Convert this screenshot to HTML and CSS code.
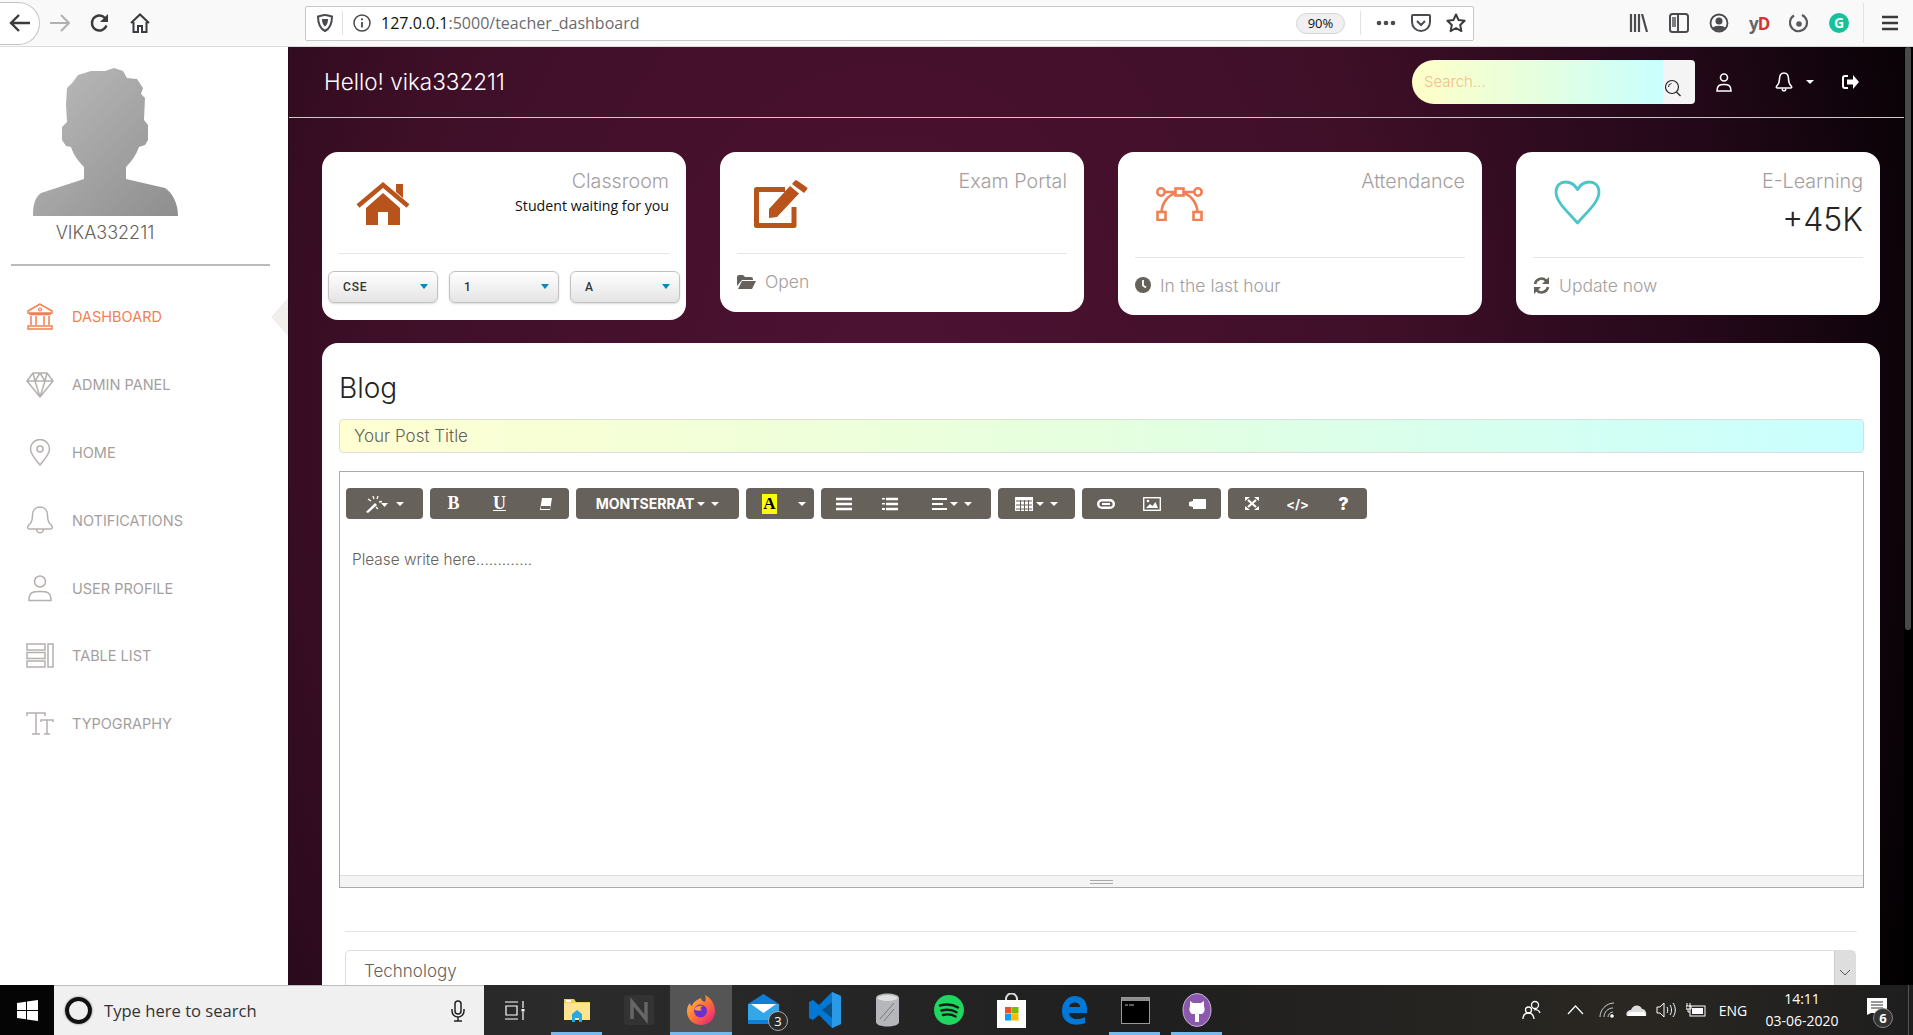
FILE: index.html
```html
<!DOCTYPE html>
<html lang="en">
<head>
    <meta charset="UTF-8">
    <meta name="viewport" content="width=device-width, initial-scale=1.0">
    <title>Teacher Dashboard</title>
    <link rel="stylesheet" href="styles.css">
</head>
<body>
<div class="browser">
    <div class="back-btn">
        <svg width="22" height="20" viewBox="0 0 22 20"><path d="M10 2 2 10l8 8M2 10h19" fill="none" stroke="#3b3b3d" stroke-width="2.4"/></svg>
    </div>
    <div class="nav-btn nav-forward">
        <svg width="20" height="18" viewBox="0 0 20 18"><path d="M11 1l8 8-8 8M19 9H0" fill="none" stroke="#b1b1b3" stroke-width="2"/></svg>
    </div>
    <div class="nav-btn">
        <svg width="20" height="20" viewBox="0 0 20 20"><path d="M16.5 12.5A7.5 7.5 0 1 1 15 5l1.500 1.500" fill="none" stroke="#3b3b3d" stroke-width="2.400"/><path d="M18 1v8h-8z" fill="#3b3b3d"/></svg>
    </div>
    <div class="nav-btn">
        <svg width="20" height="20" viewBox="0 0 20 20"><path d="M1 10l9-8.500L19 10M3.500 9v10h4.500v-6h4v6h4.500V9" fill="none" stroke="#3b3b3d" stroke-width="2"/></svg>
    </div>
    <div class="urlbar">
        <svg class="url-shield" width="16" height="18" viewBox="0 0 16 18"><path d="M1 2.500C5 1.500 6 1 8 1s3 .5 7 1.500C15 10 13 14.500 8 17 3 14.500 1 10 1 2.500z" fill="none" stroke="#4a4a4f" stroke-width="2"/><path d="M5 5h6c0 3.500-1 6-3 7.500C6 11 5 8.500 5 5z" fill="#4a4a4f"/></svg>
        <span class="url-sep"></span>
        <svg class="url-info" width="18" height="18" viewBox="0 0 18 18"><circle cx="9" cy="9" r="8" fill="none" stroke="#4a4a4f" stroke-width="1.500"/><path d="M9 8v5.500" stroke="#4a4a4f" stroke-width="1.800"/><circle cx="9" cy="5.300" r="1.100" fill="#4a4a4f"/></svg>
        <span class="url-text"><b>127.0.0.1</b>:5000/teacher_dashboard</span>
        <span class="zoom-pill">90%</span>
        <span class="url-sep sep-right"></span>
        <svg class="url-dots" width="20" height="6" viewBox="0 0 20 6"><circle cx="3" cy="3" r="2.300"/><circle cx="10" cy="3" r="2.300"/><circle cx="17" cy="3" r="2.300"/></svg>
        <svg class="url-pocket" width="20" height="18" viewBox="0 0 20 18"><path d="M2 1h16a1 1 0 0 1 1 1v6c0 5-4 9-9 9s-9-4-9-9V2a1 1 0 0 1 1-1z" fill="none" stroke="#4a4a4f" stroke-width="2"/><path d="M6 7l4 4 4-4" fill="none" stroke="#4a4a4f" stroke-width="2"/></svg>
        <svg class="url-star" width="20" height="20" viewBox="0 0 20 20"><path d="M10 1.500l2.600 5.600 6 .7-4.400 4.200 1.200 6.100L10 15l-5.400 3.100 1.200-6.100L1.400 7.800l6-.7z" fill="none" stroke="#3b3b3d" stroke-width="2" stroke-linejoin="round"/></svg>
    </div>
    <div class="browser-tools">
        <svg width="20" height="18" viewBox="0 0 20 18"><path d="M2 0v18M6 0v18M10 0v18M13 0l5 18" fill="none" stroke="#4a4a4f" stroke-width="2.200"/></svg>
        <svg width="20" height="20" viewBox="0 0 20 20"><rect x="1" y="1" width="18" height="18" rx="2.500" fill="none" stroke="#4a4a4f" stroke-width="2"/><path d="M9 1v18" stroke="#4a4a4f" stroke-width="2"/><path d="M3 4h4v10H3z" fill="#4a4a4f" opacity=".7"/></svg>
        <svg width="20" height="20" viewBox="0 0 20 20"><circle cx="10" cy="10" r="8.500" fill="none" stroke="#4a4a4f" stroke-width="1.800"/><circle cx="10" cy="8" r="3.500" fill="#4a4a4f"/><path d="M3.500 15c2-3 11-3 13 0-3 3.500-10 3.500-13 0z" fill="#4a4a4f"/></svg>
        <span class="yd">y<em>D</em></span>
        <svg width="20" height="20" viewBox="0 0 20 20"><path d="M13 2a8.500 8.500 0 1 1-8 .5" fill="none" stroke="#5a5a5f" stroke-width="2.200"/><circle cx="10" cy="11" r="2.800" fill="#5a5a5f"/></svg>
        <span class="grammarly">G</span>
        <span class="tools-sep"></span>
        <svg class="hamburger" width="16" height="16" viewBox="0 0 16 16"><path d="M0 2h16M0 8h16M0 14h16" stroke="#3b3b3d" stroke-width="2.400"/></svg>
    </div>
</div>

<div class="app">
    <aside class="sidebar">
        <svg class="avatar" width="145" height="148" viewBox="0 0 145 148">
            <defs><linearGradient id="avatarFill" x1="0" y1="0" x2="1" y2="1"><stop offset="0" stop-color="#bcbcbc"/><stop offset="1" stop-color="#8e8e8f"/></linearGradient></defs>
            <path fill="url(#avatarFill)" d="M81 0 72 3 58 3 45 7 40 14 34 20 33 36 34 54 29 59V72L33 78 38 79C41 88 46 94 51 99V111L8 125C3 129 0 134 0 148H145C145 136 140 125 132 120L93 111V99C99 93 103 87 106 79L112 77 115 72V57L111 52 112 30 108 26 110 20 104 11 94 10 90 3Z"/>
        </svg>
        <div class="user-name">VIKA332211</div>
        <div class="side-rule"></div>
        <nav class="side-nav">
            <a class="nav-item active">
                <svg width="28" height="27" viewBox="0 0 28 27"><path d="M14 1 2 8v2h24V8zM4 10v1.500h20V10M5 13v9M10 13v9M18 13v9M23 13v9M2 23h24v3H2z" fill="none" stroke="currentColor" stroke-width="1.500"/><circle cx="14" cy="6.500" r="1.500" fill="none" stroke="currentColor" stroke-width="1.200"/></svg>
                <span>DASHBOARD</span>
            </a>
            <a class="nav-item">
                <svg width="28" height="26" viewBox="0 0 28 26"><path d="M7 1h14l6 8-13 16L1 9zM1 9h26M9 9l5 16 5-16M7 1l2 8 5-8 5 8 2-8" fill="none" stroke="currentColor" stroke-width="1.500" stroke-linejoin="round"/></svg>
                <span>ADMIN PANEL</span>
            </a>
            <a class="nav-item">
                <svg width="28" height="27" viewBox="0 0 28 27"><path d="M14 26C9 20 4.500 15 4.500 10a9.500 9.500 0 0 1 19 0c0 5-4.500 10-9.500 16z" fill="none" stroke="currentColor" stroke-width="1.500"/><circle cx="14" cy="10" r="3" fill="none" stroke="currentColor" stroke-width="1.500"/></svg>
                <span>HOME</span>
            </a>
            <a class="nav-item">
                <svg width="28" height="28" viewBox="0 0 28 28"><path d="M14 1c-5 0-7.500 4-7.500 8.500 0 6-2 8-4.500 10.500-1 1.500 0 3 2 3h20c2 0 3-1.500 2-3-2.500-2.500-4.500-4.500-4.500-10.500C21.500 5 19 1 14 1zM10.500 23c.5 5 6.500 5 7 0" fill="none" stroke="currentColor" stroke-width="1.500"/></svg>
                <span>NOTIFICATIONS</span>
            </a>
            <a class="nav-item">
                <svg width="28" height="27" viewBox="0 0 28 27"><circle cx="14" cy="6.500" r="5.500" fill="none" stroke="currentColor" stroke-width="1.500"/><path d="M3 25c0-8 4-8.500 11-8.500S25 17 25 25.500H3z" fill="none" stroke="currentColor" stroke-width="1.500"/></svg>
                <span>USER PROFILE</span>
            </a>
            <a class="nav-item">
                <svg width="28" height="25" viewBox="0 0 28 25"><path d="M1 1h18v6H1zM1 9.500h18v6H1zM1 18h18v6H1zM22 1h5v23h-5z" fill="none" stroke="currentColor" stroke-width="1.500"/></svg>
                <span>TABLE LIST</span>
            </a>
            <a class="nav-item">
                <svg width="28" height="23" viewBox="0 0 28 23"><path d="M1 4V1h18v3M10 1v21M6 22h8M15 10V8h12v2M21 8v14M18 22h6" fill="none" stroke="currentColor" stroke-width="1.500"/></svg>
                <span>TYPOGRAPHY</span>
            </a>
        </nav>
        <span class="nav-arrow"></span>
    </aside>

    <main class="main">
        <div class="main-inner">
            <header class="topbar">
                <div class="hello">Hello! vika332211</div>
                <div class="search">
                    <span class="search-field">Search...</span>
                    <span class="search-btn">
                        <svg width="18" height="18" viewBox="0 0 18 18"><circle cx="8" cy="8" r="6.500" fill="none" stroke="#222" stroke-width="1.200"/><path d="M12.500 13l4 4" stroke="#222" stroke-width="1.200"/><path d="M4.500 8a3.500 3.500 0 0 1 3-3.500" stroke="#222" fill="none"/></svg>
                    </span>
                </div>
                <svg class="top-user" width="16" height="19" viewBox="0 0 16 19"><circle cx="8" cy="4.500" r="3.500" fill="none" stroke="#fff" stroke-width="1.600"/><path d="M1 18c0-5.500 2.500-6.500 7-6.500s7 1 7 6.500z" fill="none" stroke="#fff" stroke-width="1.600"/></svg>
                <svg class="top-bell" width="18" height="20" viewBox="0 0 18 20"><path d="M9 1C5.500 1 4.500 4 4.500 7c0 4-1 5.500-3 7.500C1 15.500 1.500 16 2.500 16h13c1 0 1.500-.5 1-1.500-2-2-3-3.500-3-7.500 0-3-1-6-4.500-6zM7 17c.5 2.500 3.500 2.500 4 0" fill="none" stroke="#fff" stroke-width="1.500"/></svg>
                <span class="top-caret"></span>
                <svg class="top-logout" width="17" height="14" viewBox="0 0 17 14"><path d="M6 1H3a2 2 0 0 0-2 2v8a2 2 0 0 0 2 2h3" fill="none" stroke="#fff" stroke-width="2"/><path d="M5 4.500h6V0l6 7-6 7V9.500H5z" fill="#fff"/></svg>
            </header>

            <section class="stats">
                <div class="card card-class">
                    <div class="card-top">
                        <svg class="card-icon icon-home" width="54" height="43" viewBox="0 0 54 43"><path d="M2 24 27 3l25 21" fill="none" stroke="#b9531c" stroke-width="4.500"/><path d="M40 2h7v14l-7-6zM10 26 27 11l17 15v17H32V30H22v13H10z" fill="#b9531c"/></svg>
                        <div class="card-text">
                            <div class="card-title">Classroom</div>
                            <div class="card-sub">Student waiting for you</div>
                        </div>
                    </div>
                    <div class="card-rule"></div>
                    <div class="select-row">
                        <div class="mini-select">CSE</div>
                        <div class="mini-select">1</div>
                        <div class="mini-select">A</div>
                    </div>
                </div>

                <div class="card card-exam">
                    <div class="card-top">
                        <svg class="card-icon icon-edit" width="54" height="48" viewBox="0 0 54 48"><path d="M31 9.500H2.500v36H40V27" fill="none" stroke="#b9531c" stroke-width="5" stroke-linejoin="round"/><path d="M15 29 36 6l9 7.500L23 37l-8 1zM38 4l3-3.500q1-.5 2 0l10 7q1 1 0 2l-3 3.500z" fill="#b9531c"/></svg>
                        <div class="card-text">
                            <div class="card-title">Exam Portal</div>
                        </div>
                    </div>
                    <div class="card-rule"></div>
                    <div class="card-foot">
                        <svg width="19" height="14" viewBox="0 0 19 14"><path d="M0 2q0-2 2-2h4l2 2h6q2 0 2 2v1H5L0 11zM5 6h14l-4 8H1z" fill="#66615b"/></svg>
                        <span>Open</span>
                    </div>
                </div>

                <div class="card card-tall">
                    <div class="card-top">
                        <svg class="card-icon icon-curve" width="47" height="35" viewBox="0 0 47 35"><g fill="none" stroke="#f17f53" stroke-width="2.600"><circle cx="5" cy="6" r="3.700"/><circle cx="42" cy="6" r="3.700"/><rect x="19.500" y="2.500" width="8" height="7"/><rect x="1.500" y="26" width="8" height="8"/><rect x="37.500" y="26" width="8" height="8"/><path d="M9 6h10M28 6h10M5.500 26C6 17 12 9 20 7M41.500 26C41 17 35 9 27 7"/></g></svg>
                        <div class="card-text">
                            <div class="card-title">Attendance</div>
                        </div>
                    </div>
                    <div class="card-rule"></div>
                    <div class="card-foot">
                        <svg width="16" height="16" viewBox="0 0 16 16"><circle cx="8" cy="8" r="8" fill="#66615b"/><path d="M8 3v5.500l3 2" fill="none" stroke="#fff" stroke-width="1.800"/></svg>
                        <span>In the last hour</span>
                    </div>
                </div>

                <div class="card card-tall">
                    <div class="card-top">
                        <svg class="card-icon icon-heart" width="47" height="45" viewBox="0 0 47 45"><path d="M23.500 43C14 32 2 22 2 12 2 5.500 6.500 2 11.500 2c5 0 9.500 3 12 7.500C26 5 30.500 2 35.500 2 40.500 2 45 5.500 45 12c0 10-12 20-21.500 31z" fill="none" stroke="#4cc4c8" stroke-width="2.800" stroke-linejoin="round"/></svg>
                        <div class="card-text">
                            <div class="card-title">E-Learning</div>
                            <div class="card-number">+45K</div>
                        </div>
                    </div>
                    <div class="card-rule"></div>
                    <div class="card-foot">
                        <svg width="17" height="17" viewBox="0 0 17 17"><path d="M2 7a6.500 6.500 0 0 1 11-3.500L15 5" fill="none" stroke="#66615b" stroke-width="2.600"/><path d="M16 0v7h-7zM1 17v-7h7z" fill="#66615b"/><path d="M15 10a6.500 6.500 0 0 1-11 3.500L2 12" fill="none" stroke="#66615b" stroke-width="2.600"/></svg>
                        <span>Update now</span>
                    </div>
                </div>
            </section>

            <section class="blog">
                <h2 class="blog-title">Blog</h2>
                <div class="post-title">Your Post Title</div>
                <div class="editor">
                    <div class="toolbar">
                        <div class="tool-group group-wand">
                            <svg width="24" height="18" viewBox="0 0 24 18"><path d="M1 17 10 8l2 2-9 8z" fill="#fff"/><path d="M8 1l1 3M3 4l3 2M13 1l-1 3M14 7l3-.5M11 12l2 2" stroke="#fff" stroke-width="1.300"/><path d="M16 8h7l-3.500 4z" fill="#fff"/></svg>
                            <span class="caret"></span>
                        </div>
                        <div class="tool-group group-style">
                            <span class="tool tool-serif">B</span>
                            <span class="tool tool-serif tool-under">U</span>
                            <span class="tool"><svg width="13" height="12" viewBox="0 0 13 12"><path d="M3 0h10l-2 12H1z" fill="#fff"/><path d="M2 8h9.500l-.5 3H2z" fill="#66615b"/></svg></span>
                        </div>
                        <div class="tool-group group-font">
                            <span class="font-name">MONTSERRAT</span>
                            <span class="caret caret-sm"></span>
                            <span class="caret"></span>
                        </div>
                        <div class="tool-group group-color">
                            <span class="color-a">A</span>
                            <span class="caret"></span>
                        </div>
                        <div class="tool-group group-para">
                            <span class="tool"><svg width="16" height="14" viewBox="0 0 16 14"><path d="M0 2h16M0 7h16M0 12h16" stroke="#fff" stroke-width="2.600"/></svg></span>
                            <span class="tool"><svg width="16" height="14" viewBox="0 0 16 14"><path d="M4 2h12M4 7h12M4 12h12" stroke="#fff" stroke-width="2.600"/><path d="M0 1h3v1.500H0zM0 6h3v1.500H0zM0 11h3v2H0z" fill="#fff"/></svg></span>
                            <span class="tool tool-wide"><svg width="15" height="14" viewBox="0 0 15 14"><path d="M0 2h15M0 7h11M0 12h15" stroke="#fff" stroke-width="2.200"/></svg><span class="caret caret-sm"></span><span class="caret"></span></span>
                        </div>
                        <div class="tool-group group-table">
                            <svg width="18" height="14" viewBox="0 0 18 14"><path d="M0 0h18v14H0z" fill="#fff"/><path d="M1 4h16M1 8h16M1 12h16M5.500 3v11M9.500 3v11M13.500 3v11" stroke="#66615b"/></svg>
                            <span class="caret caret-sm"></span>
                            <span class="caret"></span>
                        </div>
                        <div class="tool-group group-style">
                            <span class="tool"><svg width="18" height="10" viewBox="0 0 18 10"><rect x="1.200" y="1.200" width="15.600" height="7.600" rx="3.800" fill="none" stroke="#fff" stroke-width="2.400"/><path d="M5 5h8" stroke="#fff" stroke-width="2"/></svg></span>
                            <span class="tool"><svg width="18" height="14" viewBox="0 0 18 14"><rect x=".7" y=".7" width="16.600" height="12.600" fill="none" stroke="#fff" stroke-width="1.400"/><path d="M3 11l4-4 2.500 2 3-4L15 11z" fill="#fff"/><circle cx="5" cy="4" r="1.300" fill="#fff"/></svg></span>
                            <span class="tool"><svg width="17" height="10" viewBox="0 0 17 10"><rect x="4" width="13" height="10" fill="#fff"/><path d="M0 3l4-1v6l-4-1z" fill="#fff"/></svg></span>
                        </div>
                        <div class="tool-group group-style">
                            <span class="tool"><svg width="14" height="13" viewBox="0 0 14 13"><path d="M3 3l8 7M11 3l-8 7" stroke="#fff" stroke-width="2.200"/><path d="M0 0h5L0 4zM14 0H9l5 4zM0 13h5l-5-4zM14 13H9l5-4z" fill="#fff"/></svg></span>
                            <span class="tool tool-code">&lt;/&gt;</span>
                            <span class="tool tool-help">?</span>
                        </div>
                    </div>
                    <div class="editor-body">Please write here.............</div>
                    <div class="editor-resize"><span class="resize-grip"></span></div>
                </div>
                <div class="blog-rule"></div>
                <div class="category">
                    <span>Technology</span>
                    <span class="category-arrow"><svg width="12" height="7" viewBox="0 0 12 7"><path d="M1 1l5 5 5-5" fill="none" stroke="#555"/></svg></span>
                </div>
            </section>
        </div>
        <div class="scrollbar"><span class="scroll-thumb"></span></div>
    </main>
</div>

<footer class="taskbar">
    <div class="start">
        <svg width="21" height="21" viewBox="0 0 21 21"><path d="M0 3l9-1.300V10H0zM10 1.500 21 0v10H10zM0 11h9v8.300L0 18zM10 11h11v10l-11-1.500z" fill="#fff"/></svg>
    </div>
    <div class="task-search">
        <span class="cortana"></span>
        <span class="task-search-text">Type here to search</span>
        <svg class="mic" width="14" height="22" viewBox="0 0 14 22"><rect x="4" y="1" width="6" height="13" rx="3" fill="none" stroke="#222" stroke-width="1.500"/><path d="M1 9v2a6 6 0 0 0 12 0V9M7 17v4M3 21h8" fill="none" stroke="#222" stroke-width="1.500"/></svg>
    </div>
    <div class="task-icons">
        <span class="task-slot"><svg width="20" height="19" viewBox="0 0 20 19"><path d="M0 1h13M0 18h13M1 5h11v9H1zM18 0v7M18 11v8" fill="none" stroke="#fff" stroke-width="1.200"/><rect x="16.500" y="8" width="3" height="2.500" fill="#fff"/></svg></span>
        <span class="task-slot open"><svg width="28" height="28" viewBox="0 0 28 28"><path d="M1 3h10l2 3h14v17H1z" fill="#f3cd5c"/><path d="M1 7h26v17H1z" fill="#fde58f"/><path d="M9 18l5-4 5 4v8h-3v-4h-4v4H9z" fill="#2aa7e5"/><path d="M3 4h5v2H3z" fill="#fff"/></svg></span>
        <span class="task-slot"><svg width="30" height="30" viewBox="0 0 30 30"><rect width="30" height="30" rx="3" fill="#333"/><path d="M8 24V7l14 17V7" fill="none" stroke="#666" stroke-width="3.500"/></svg></span>
        <span class="task-slot open active"><svg width="28" height="32" viewBox="0 0 28 32"><defs><linearGradient id="foxFill" x1="0" y1="0" x2="1" y2="1"><stop offset="0" stop-color="#ffcf3e"/><stop offset=".5" stop-color="#ff7139"/><stop offset="1" stop-color="#e31587"/></linearGradient></defs><path d="M14 31C6 31 0 25 0 17c0-3 1-6 3-8 0 2 1 3 2 3 1-4 5-6 9-8 0 2 1 3 4 4 1-2 1-4 0-7 6 3 10 9 10 16 0 8-6 14-14 14z" fill="url(#foxFill)"/><circle cx="13.500" cy="17" r="6.500" fill="#6e2fd1"/><path d="M7 15c2-3 6-4 9-3-3 1-3 3-1 4-3 1-6 1-8-1z" fill="#ff9a3c"/></svg></span>
        <span class="task-slot"><svg width="31" height="32" viewBox="0 0 31 32"><path d="M0 10 15.500 0 31 10v20H0z" fill="#0f7fd6"/><path d="M0 10h31v16H0z" fill="#33a7ea"/><path d="M3 10h25l-12.500 9z" fill="#fff"/></svg><span class="mail-badge">3</span></span>
        <span class="task-slot"><svg width="32" height="36" viewBox="0 0 32 36"><path d="M23 0 32 4v28l-9 4L10 23l-6 5-4-2V10l4-2 6 5z" fill="#0078d4"/><path d="M23 0 32 4v28l-9 4z" fill="#2a9ae6"/><path d="M23 10 13 18l10 8z" fill="#1a1f26" opacity=".45"/></svg></span>
        <span class="task-slot"><svg width="23" height="34" viewBox="0 0 23 34"><path d="M0 5c0-6 23-6 23 0v24c0 6-23 6-23 0z" fill="#b5b7ba"/><ellipse cx="11.500" cy="5" rx="10" ry="3" fill="#dfe0e2"/><path d="M4 26 18 10M8 28l10-12" stroke="#777" stroke-width="1"/></svg></span>
        <span class="task-slot"><svg width="30" height="30" viewBox="0 0 30 30"><circle cx="15" cy="15" r="15" fill="#1ed760"/><path d="M6 10.500c6-1.500 13-1 18 2M7.500 15.500c5-1.200 11-.8 15 1.800M9 20c4-1 9-.7 12.500 1.500" fill="none" stroke="#1a1a1a" stroke-width="2.400" stroke-linecap="round"/></svg></span>
        <span class="task-slot"><svg width="29" height="35" viewBox="0 0 29 35"><path d="M9 8V6a5.500 5.500 0 0 1 11 0v2" fill="none" stroke="#ddd" stroke-width="2"/><rect y="7" width="29" height="28" fill="#fff"/><rect x="8" y="14" width="6.500" height="6.500" fill="#f25022"/><rect x="15" y="14" width="6.500" height="6.500" fill="#7fba00"/><rect x="8" y="21" width="6.500" height="6.500" fill="#00a4ef"/><rect x="15" y="21" width="6.500" height="6.500" fill="#ffb900"/></svg></span>
        <span class="task-slot"><svg width="27" height="29" viewBox="0 0 27 29"><path d="M2 15C2 6 8 0 15 0c7 0 12 5 12 13v4H9c0 6 9 8 16 4v6c-10 4-23 1-23-12zM9 11h11c0-6-10-6-11 0z" fill="#0078d7"/></svg></span>
        <span class="task-slot open"><svg width="29" height="27" viewBox="0 0 29 27"><rect x=".5" y=".5" width="28" height="26" fill="#000" stroke="#999"/><rect x="1" y="1" width="27" height="3" fill="#8e8e8e"/><path d="M4 8h3M8 8h5" stroke="#bbb"/></svg></span>
        <span class="task-slot open"><svg width="30" height="34" viewBox="0 0 30 34"><ellipse cx="15" cy="17" rx="14" ry="16.500" fill="#8c58ad" stroke="#c5b4d1"/><path d="M8 8l3 2h8l3-2v5c1 3 1 6-2 8h-3v8h-4v-8h-3c-3-2-3-5-2-8z" fill="#fff"/></svg></span>
    </div>
    <div class="tray">
        <span class="tray-item"><svg width="19" height="20" viewBox="0 0 19 20"><circle cx="13" cy="5" r="3.500" fill="none" stroke="#fff" stroke-width="1.300"/><circle cx="6.500" cy="10" r="3" fill="none" stroke="#fff" stroke-width="1.300"/><path d="M1 19c0-5 3-6 5.500-6s5 1 5.500 6M12 10c2-1 5 0 6 3" fill="none" stroke="#fff" stroke-width="1.300"/></svg></span>
        <span class="tray-item"><svg width="17" height="10" viewBox="0 0 17 10"><path d="M1 9l7.500-8L16 9" fill="none" stroke="#fff" stroke-width="1.200"/></svg></span>
        <span class="tray-item"><svg width="16" height="16" viewBox="0 0 16 16"><path d="M1 15C1 8 7 1 15 1M5 15c0-5 4-9 9-9M9 15c0-2 2-5 5-5" fill="none" stroke="#ccc"/><circle cx="13" cy="14" r="1.800" fill="#fff"/></svg></span>
        <span class="tray-item"><svg width="21" height="13" viewBox="0 0 21 13"><path d="M1 12C-1 9 2 6 5 6c1-4 8-7 11-1 3 0 5 3 4 7z" fill="#ddd"/><path d="M3 8h15l2 4H2z" fill="#fff"/></svg></span>
        <span class="tray-item"><svg width="20" height="16" viewBox="0 0 20 16"><path d="M1 5h3l4-4v14l-4-4H1zM11 5c1 2 1 4 0 6M14 3c2 3 2 7 0 10M17 1c3 4 3 10 0 14" fill="none" stroke="#fff"/></svg></span>
        <span class="tray-item"><svg width="20" height="14" viewBox="0 0 20 14"><rect x="4" y="3" width="15" height="10" fill="none" stroke="#fff"/><rect x="6" y="5" width="11" height="6" fill="#fff"/><path d="M1 0v3M4 0v3M0 3h5v3H0zM2 6v3h2" stroke="#fff" fill="none"/></svg></span>
        <span class="tray-item tray-lang">ENG</span>
        <span class="tray-clock"><span>14:11</span><span>03-06-2020</span></span>
        <span class="tray-notif">
            <svg width="20" height="17" viewBox="0 0 20 17"><path d="M0 0h20v15H4l-4 2z" fill="#fff"/><path d="M4 4h12M4 7h12M4 10h12" stroke="#333"/></svg>
            <span class="notif-badge">6</span>
        </span>
        <span class="tray-end"></span>
    </div>
</footer>
</body>
</html>
```

FILE: styles.css
```css
* {
    box-sizing: border-box;
}
html {
    overflow: hidden;
}
body {
    margin: 0;
    display: flex;
    flex-direction: column;
    height: 1035px;
    overflow: hidden;
    font-family: Inter, "Liberation Sans", sans-serif;
    background-color: #fff;
}

/* browser chrome */
.browser {
    position: relative;
    display: flex;
    align-items: center;
    flex: 0 0 47px;
    background-color: #f9f9fa;
    border-bottom: 1px solid #dcdcde;
    font-family: "Open Sans", sans-serif;
}
.back-btn {
    display: flex;
    align-items: center;
    justify-content: center;
    flex: 0 0 40px;
    height: 43px;
    margin-right: 0;
    background-color: #fff;
    border: 1px solid #c4c4c6;
    border-left: none;
    border-radius: 0 22px 22px 0;
}
.nav-btn {
    display: flex;
    align-items: center;
    justify-content: center;
    flex: 0 0 40px;
}
.nav-forward {
    margin-left: 0;
}
.urlbar {
    display: flex;
    align-items: center;
    width: 1169px;
    height: 35px;
    margin-left: 145px;
    padding-left: 11px;
    background-color: #fff;
    border: 1px solid #c8c8ca;
    border-radius: 2px;
}
.url-sep {
    width: 1px;
    height: 24px;
    margin: 0 10px 0 9px;
    background-color: #e2e2e4;
}
.url-info {
    margin-right: 10px;
}
.url-text {
    font-size: 16px;
    color: #6a6a70;
    white-space: nowrap;
}
.url-text b {
    font-weight: 400;
    color: #111;
}
.zoom-pill {
    width: 49px;
    height: 21px;
    margin-left: auto;
    font-size: 13px;
    line-height: 19px;
    text-align: center;
    color: #111;
    background-color: #f0f0f2;
    border: 1px solid #d5d5d7;
    border-radius: 11px;
}
.sep-right {
    margin: 0 0 0 15px;
}
.url-dots {
    margin-left: 15px;
    fill: #4a4a4f;
}
.url-pocket {
    margin-left: 15px;
}
.url-star {
    margin-left: 15px;
    margin-right: 7px;
}
.browser-tools {
    display: flex;
    align-items: center;
    gap: 20px;
    margin-left: 155px;
}
.yd {
    width: 20px;
    font-size: 17px;
    font-weight: 700;
    color: #666;
    letter-spacing: -1px;
}
.yd em {
    font-style: normal;
    color: #d8332f;
}
.grammarly {
    width: 20px;
    height: 20px;
    font-size: 14px;
    font-weight: 700;
    line-height: 20px;
    text-align: center;
    color: #fff;
    background-color: #15c39a;
    border-radius: 50%;
}
.tools-sep {
    width: 1px;
    height: 40px;
    margin-left: -6px;
    background-color: #e2e2e4;
}
.hamburger {
    margin-left: -2px;
}

/* app */
.app {
    position: relative;
    display: flex;
    flex: 0 0 938px;
    overflow: hidden;
}
.sidebar {
    position: relative;
    flex: 0 0 288px;
    padding-top: 21px;
    background-color: #fff;
}
.avatar {
    display: block;
    margin-left: 33px;
}
.user-name {
    width: 210px;
    margin-top: 7px;
    font-size: 18px;
    font-weight: 300;
    line-height: 20px;
    text-align: center;
    color: #66615b;
}
.side-rule {
    height: 2px;
    margin: 21px 18px 0 11px;
    background-color: #bbb;
}
.side-nav {
    display: flex;
    flex-direction: column;
    margin-top: 17px;
}
.nav-item {
    display: flex;
    align-items: center;
    height: 67.8px;
    padding-left: 26px;
    font-size: 14.5px;
    font-weight: 400;
    color: #a49e9e;
}
.nav-item svg {
    flex: 0 0 28px;
    margin-right: 18px;
    color: #b5b0ae;
}
.nav-item.active,
.nav-item.active svg {
    color: #f17f53;
}
.nav-arrow {
    position: absolute;
    top: 251px;
    right: 0;
    width: 0;
    height: 0;
    border-top: 19px solid transparent;
    border-bottom: 19px solid transparent;
    border-right: 17px solid #f1efec;
}

.main {
    display: flex;
    flex: 1;
    background: radial-gradient(ellipse 1120px 1500px at 600px 350px, #4d1232 0%, #3f0f28 45%, #220818 75%, #000 100%);
    border-left: 1px solid #2c0a1c;
}
.main-inner {
    flex: 1;
    min-width: 0;
}
.scrollbar {
    flex: 0 0 9px;
    background-color: #000;
}
.scroll-thumb {
    display: block;
    width: 6px;
    height: 583px;
    margin-left: 1px;
    background-color: #4a4a4a;
    border-radius: 3px;
}

/* top bar */
.topbar {
    display: flex;
    align-items: center;
    height: 71px;
    padding-left: 35px;
    border-bottom: 1px solid #cfc8cb;
}
.hello {
    padding-bottom: 2px;
    font-size: 22.5px;
    font-weight: 300;
    color: #fff;
}
.search {
    display: flex;
    width: 283px;
    height: 44px;
    margin-left: auto;
    border-radius: 22px 4px 4px 22px;
    overflow: hidden;
}
.search-field {
    flex: 1;
    padding-left: 12px;
    font-size: 15px;
    font-weight: 300;
    line-height: 44px;
    color: #f5bd85;
    background: linear-gradient(to right, #ffffc8, #e5ffdf 50%, #c9ffff);
}
.search-btn {
    display: flex;
    align-items: flex-end;
    justify-content: center;
    flex: 0 0 32px;
    padding-bottom: 7px;
    padding-right: 13px;
    background-color: #f4f4f4;
}
.top-user {
    margin-left: 21px;
}
.top-bell {
    margin-left: 43px;
}
.top-caret {
    width: 0;
    height: 0;
    margin-left: 13px;
    border-top: 4px solid #fff;
    border-left: 4px solid transparent;
    border-right: 4px solid transparent;
}
.top-logout {
    margin-left: 28px;
    margin-right: 45px;
}

/* stat cards */
.stats {
    display: grid;
    grid-template-columns: repeat(4, 364px);
    align-items: start;
    gap: 34px;
    margin: 34px 24px 0 33px;
}
.card {
    padding: 0 17px;
    background-color: #fff;
    border-radius: 16px;
}
.card-top {
    position: relative;
    height: 101px;
    padding-top: 15px;
}
.card-tall .card-top {
    height: 105px;
}
.card-icon {
    position: absolute;
    left: 17px;
}
.icon-home {
    top: 30px;
}
.icon-edit {
    top: 28px;
}
.icon-curve {
    top: 34px;
    left: 21px;
}
.icon-heart {
    top: 28px;
    left: 21px;
}
.card-text {
    text-align: right;
}
.card-title {
    font-size: 19.7px;
    font-weight: 300;
    line-height: 28px;
    color: #a49e9e;
}
.card-sub {
    margin-top: 1px;
    font-family: "Open Sans", sans-serif;
    font-size: 14.2px;
    line-height: 20px;
    color: #111;
}
.card-number {
    margin-top: 6px;
    font-size: 32px;
    font-weight: 300;
    line-height: 38px;
    color: #252422;
}
.card-rule {
    height: 1px;
    background-color: #e5e5e5;
}
.card-foot {
    display: flex;
    align-items: center;
    height: 58px;
    padding-bottom: 3px;
    font-size: 17.5px;
    font-weight: 300;
    color: #a49e9e;
}
.card-tall .card-foot {
    height: 57px;
}
.card-foot svg {
    margin-right: 9px;
}
.select-row {
    display: flex;
    gap: 11px;
    height: 66px;
    margin: 0 -12px 0 -11px;
    padding-top: 17px;
}
.mini-select {
    position: relative;
    flex: 0 0 110px;
    height: 32px;
    padding-left: 14px;
    font-family: Roboto, sans-serif;
    font-size: 12px;
    font-weight: 500;
    line-height: 30px;
    letter-spacing: .8px;
    color: #333;
    background: linear-gradient(to bottom, #fff, #e4e4e4);
    border: 1px solid #c2c2c2;
    border-radius: 6px;
    box-shadow: 0 1px 2px rgba(0, 0, 0, .15);
}
.mini-select::after {
    content: "";
    position: absolute;
    top: 12px;
    right: 9px;
    border-top: 5px solid #0a87bd;
    border-left: 4px solid transparent;
    border-right: 4px solid transparent;
}

/* blog */
.blog {
    margin: 23px 24px 0 33px;
    padding: 0 16px 40px 17px;
    background-color: #fff;
    border-radius: 16px 16px 0 0;
}
.blog-title {
    margin: 0;
    padding-top: 27px;
    font-size: 28px;
    font-weight: 300;
    line-height: 36px;
    color: #252422;
}
.post-title {
    height: 34px;
    margin-top: 13px;
    padding-left: 14px;
    font-size: 17px;
    font-weight: 300;
    line-height: 32px;
    color: #66615b;
    background: linear-gradient(to right, #ffffd2, #e5ffdf 50%, #c9ffff);
    border: 1px solid #ddd;
    border-radius: 4px;
}
.editor {
    height: 417px;
    margin-top: 18px;
    display: flex;
    flex-direction: column;
    border: 1px solid #aaa;
}
.toolbar {
    display: flex;
    gap: 7px;
    padding: 16px 0 0 6px;
}
.tool-group {
    display: flex;
    align-items: center;
    justify-content: center;
    height: 31px;
    color: #fff;
    background-color: #66615b;
    border-radius: 4px;
}
.tool {
    display: flex;
    align-items: center;
    justify-content: center;
    width: 46px;
}
.tool-wide {
    width: 78px;
}
.tool-wide .caret-sm {
    margin-left: 3px;
}
.group-style {
    width: 139px;
}
.group-wand {
    width: 77px;
}
.group-font {
    width: 163px;
}
.group-color {
    justify-content: flex-start;
    width: 68px;
    padding-left: 16px;
    gap: 14px;
}
.group-para {
    width: 170px;
}
.group-table {
    width: 77px;
}
.tool-serif {
    font-family: "Liberation Serif", serif;
    font-size: 18px;
    font-weight: 700;
}
.tool-under {
    text-decoration: underline;
}
.tool-code {
    font-size: 13px;
    font-weight: 700;
}
.tool-help {
    font-size: 18px;
    font-weight: 800;
}
.font-name {
    font-size: 14px;
    font-weight: 700;
}
.color-a {
    width: 15px;
    font-family: "Liberation Serif", serif;
    font-size: 17px;
    font-weight: 700;
    line-height: 20px;
    text-align: center;
    color: #000;
    background-color: #ff0;
}
.caret {
    width: 0;
    height: 0;
    margin-left: 7px;
    border-top: 4px solid #fff;
    border-left: 4px solid transparent;
    border-right: 4px solid transparent;
}
.caret-sm {
    margin-left: 3px;
    margin-right: -1px;
}
.editor-body {
    flex: 1;
    padding: 29px 0 0 12px;
    font-size: 15.4px;
    font-weight: 300;
    line-height: 24px;
    color: #66615b;
}
.editor-resize {
    display: flex;
    align-items: center;
    justify-content: center;
    height: 12px;
    background-color: #f4f4f4;
    border-top: 1px solid #ddd;
}
.resize-grip {
    width: 23px;
    height: 4px;
    border-top: 1px solid #aaa;
    border-bottom: 1px solid #aaa;
}
.blog-rule {
    height: 1px;
    margin: 43px 7px 0 6px;
    background-color: #e5e5e5;
}
.category {
    display: flex;
    justify-content: space-between;
    height: 44px;
    margin: 18px 8px 0 6px;
    padding-left: 18px;
    font-size: 17px;
    font-weight: 300;
    line-height: 40px;
    color: #66615b;
    border: 1px solid #ddd;
    border-radius: 5px;
}
.category-arrow {
    display: flex;
    align-items: center;
    justify-content: center;
    width: 21px;
    background-color: #dedede;
    border-left: 1px solid #ccc;
}

/* taskbar */
.taskbar {
    display: flex;
    flex: 0 0 50px;
    background: linear-gradient(to right, #1d1d1d, #2b2b2b 30%, #1f1f1f 60%, #2a2722 85%, #1e1e1e);
    font-family: "Open Sans", sans-serif;
}
.start {
    display: flex;
    align-items: center;
    justify-content: center;
    flex: 0 0 54px;
    background-color: #050505;
}
.task-search {
    display: flex;
    align-items: center;
    flex: 0 0 430px;
    padding-left: 11px;
    background-color: #f0f0f0;
    border-top: 1px solid #bdbdbd;
}
.cortana {
    width: 27px;
    height: 27px;
    border: 4px solid #111;
    border-radius: 50%;
    box-shadow: 0 0 2px #555;
}
.task-search-text {
    margin-left: 12px;
    font-size: 16.6px;
    color: #333;
}
.mic {
    margin-left: auto;
    margin-right: 19px;
}
.task-icons {
    display: flex;
}
.task-slot {
    position: relative;
    display: flex;
    align-items: center;
    justify-content: center;
    width: 62px;
}
.task-slot.open::after {
    content: "";
    position: absolute;
    left: 5px;
    right: 6px;
    bottom: 0;
    height: 3px;
    background-color: #76b9ed;
}
.task-slot.active {
    background-color: #555;
}
.task-slot.active::after {
    left: 0;
    right: 0;
}
.mail-badge {
    position: absolute;
    right: 6px;
    bottom: 4px;
    width: 20px;
    height: 20px;
    font-size: 13px;
    line-height: 18px;
    text-align: center;
    color: #fff;
    background-color: #2b2b2b;
    border: 1px solid #aaa;
    border-radius: 50%;
}
.tray {
    display: grid;
    grid-template-columns: 44px 44px 20px 38px 22px 38px 36px 102px 50px 10px;
    align-items: center;
    margin-left: auto;
    color: #fff;
}
.tray-item {
    display: flex;
    align-items: center;
    justify-content: center;
}
.tray-lang {
    font-size: 14px;
}
.tray-clock {
    display: flex;
    flex-direction: column;
    align-items: center;
    font-size: 14px;
    line-height: 22px;
}
.tray-notif {
    position: relative;
    display: flex;
    justify-content: center;
    padding-right: 2px;
    margin-top: -8px;
}
.notif-badge {
    position: absolute;
    top: 10px;
    right: 10px;
    width: 20px;
    height: 20px;
    font-size: 13px;
    font-weight: 700;
    line-height: 18px;
    text-align: center;
    background-color: #333;
    border: 1px solid #888;
    border-radius: 50%;
}
.tray-end {
    justify-self: start;
    width: 1px;
    height: 50px;
    margin-left: 5px;
    background-color: #555;
}
```
